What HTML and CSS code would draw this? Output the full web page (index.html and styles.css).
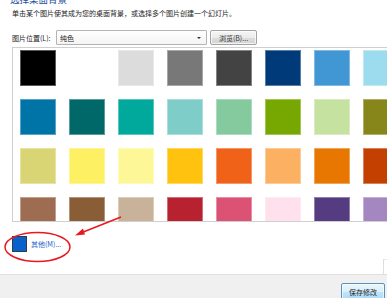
FILE: index.html
```html
<!DOCTYPE html>
<html>
<head>
<meta charset="utf-8">
<link rel="stylesheet" href="styles.css">
</head>
<body>
<div class="page">
  <div class="content">
    <div class="title">选择桌面背景</div>
    <div class="subtitle">单击某个图片使其成为您的桌面背景，或选择多个图片创建一个幻灯片。</div>
    <div class="location-row">
      <span class="label">图片位置(L):</span>
      <div class="select"><span class="select-text">纯色</span><span class="select-arrow"></span></div>
      <div class="btn">浏览(B)...</div>
    </div>
    <div class="list">
      <div class="grid">
        <div class="sw" style="background:#000000"></div>
        <div class="sw" style="background:#ffffff"></div>
        <div class="sw" style="background:#dcdcdc"></div>
        <div class="sw" style="background:#787878"></div>
        <div class="sw" style="background:#434343"></div>
        <div class="sw" style="background:#003a78"></div>
        <div class="sw" style="background:#4196d4"></div>
        <div class="sw" style="background:#9cdcee"></div>

        <div class="sw" style="background:#0073a7"></div>
        <div class="sw" style="background:#006869"></div>
        <div class="sw" style="background:#00a99c"></div>
        <div class="sw" style="background:#7ecdc9"></div>
        <div class="sw" style="background:#85c99f"></div>
        <div class="sw" style="background:#77a701"></div>
        <div class="sw" style="background:#c6e2a0"></div>
        <div class="sw" style="background:#86861a"></div>

        <div class="sw" style="background:#dad574"></div>
        <div class="sw" style="background:#fdf062"></div>
        <div class="sw" style="background:#fef797"></div>
        <div class="sw" style="background:#ffc20e"></div>
        <div class="sw" style="background:#ef6217"></div>
        <div class="sw" style="background:#fbb062"></div>
        <div class="sw" style="background:#e87702"></div>
        <div class="sw" style="background:#c44000"></div>

        <div class="sw" style="background:#9e6c51"></div>
        <div class="sw" style="background:#895e37"></div>
        <div class="sw" style="background:#c9b29a"></div>
        <div class="sw" style="background:#b82230"></div>
        <div class="sw" style="background:#dc5275"></div>
        <div class="sw" style="background:#fee1ec"></div>
        <div class="sw" style="background:#553b7f"></div>
        <div class="sw" style="background:#a487c0"></div>
      </div>
    </div>
    <div class="other-row">
      <span class="other-swatch"></span>
      <span class="other-link">其他(M)...</span>
    </div>
    <div class="spacer"><span class="edge"></span></div>
  </div>
  <div class="footer">
    <div class="save-btn">保存修改</div>
  </div>
  <svg class="annot" width="387" height="298" viewBox="0 0 387 298">
    <ellipse cx="37.5" cy="247" rx="32.5" ry="14.5" fill="none" stroke="#e8191e" stroke-width="1.5"/>
    <line x1="121" y1="217" x2="82" y2="232.5" stroke="#e8191e" stroke-width="1.5"/>
    <polygon points="75,235.5 83,228.5 85,234.5" fill="#e8191e"/>
  </svg>
</div>
</body>
</html>
```
FILE: styles.css
```css
html, body {
  margin: 0;
  padding: 0;
  overflow: hidden;
  background: #ffffff;
}
body {
  font-family: "Noto Sans CJK SC", "Noto Sans", sans-serif;
  width: 387px;
  height: 298px;
}
.page {
  position: relative;
  width: 387px;
  height: 298px;
  overflow: hidden;
  display: flex;
  flex-direction: column;
}
.content {
  padding-left: 12px;
  flex: 1;
  display: flex;
  flex-direction: column;
  min-width: 0;
}
.title {
  margin-top: -7px;
  margin-left: -2px;
  font-size: 9.5px;
  line-height: 12px;
  height: 12px;
  color: #1d4f9c;
  white-space: nowrap;
}
.subtitle {
  margin-top: 4px;
  font-size: 7px;
  line-height: 9px;
  color: #222;
  white-space: nowrap;
}
.location-row {
  margin-top: 12px;
  display: flex;
  align-items: center;
  height: 15px;
}
.label {
  font-size: 7px;
  color: #222;
  width: 44px;
  white-space: nowrap;
}
.select {
  width: 146px;
  height: 13px;
  border: 1px solid #b4b4b4;
  border-radius: 1px;
  background: linear-gradient(#ffffff, #f4f4f4);
  display: flex;
  align-items: center;
  padding-left: 3px;
  box-sizing: content-box;
}
.select-text {
  font-size: 7px;
  color: #222;
  flex: 1;
}
.select-arrow {
  width: 0;
  height: 0;
  border-left: 2px solid transparent;
  border-right: 2px solid transparent;
  border-top: 2.5px solid #333;
  margin-right: 5px;
}
.btn {
  margin-left: 3px;
  width: 45px;
  height: 13px;
  border: 1px solid #a3a3a3;
  border-radius: 2px;
  background: linear-gradient(#f6f6f6 0%, #ebebeb 50%, #dddddd 51%, #d4d4d4 100%);
  box-shadow: inset 0 0 0 1px rgba(255,255,255,0.7);
  font-size: 7px;
  color: #333;
  display: flex;
  align-items: center;
  justify-content: center;
  white-space: nowrap;
}
.list {
  margin-top: 2px;
  width: 420px;
  height: 171px;
  border: 1px solid #cfcfcf;
  overflow: hidden;
  padding: 2px 0 0 7px;
  box-sizing: content-box;
  flex-shrink: 0;
}
.grid {
  display: grid;
  grid-template-columns: repeat(8, 36px);
  grid-auto-rows: 35.5px;
  column-gap: 13px;
  row-gap: 13.5px;
}
.sw {
  box-shadow: inset 0 0 0 1px rgba(255,255,255,0.35);
}
.other-row {
  margin-top: 14px;
  display: flex;
  align-items: center;
  height: 16px;
}
.other-swatch {
  width: 13px;
  height: 14px;
  background: #0862cc;
  border: 1px solid #333a4a;
}
.other-link {
  margin-left: 4px;
  font-size: 7px;
  color: #1a62c8;
  white-space: nowrap;
}
.spacer {
  flex: 1;
  display: flex;
  justify-content: flex-end;
  align-items: flex-end;
}
.edge {
  width: 3px;
  height: 14px;
  border-left: 1px solid #dedede;
  border-top: 1px solid #e6e6e6;
}
.footer {
  height: 23px;
  background: #f0f0f0;
  border-top: 1px solid #dfdfdf;
  display: flex;
  justify-content: flex-end;
  align-items: flex-start;
  padding-right: 2px;
  flex-shrink: 0;
}
.save-btn {
  margin-top: 8px;
  width: 42px;
  height: 16px;
  border: 1px solid #5d8fb8;
  border-radius: 2px;
  background: linear-gradient(#e9f5fc 0%, #d9effb 50%, #bee6fb 51%, #a8d9f4 100%);
  box-shadow: inset 0 0 0 1px rgba(255,255,255,0.6);
  font-size: 7px;
  color: #222;
  display: flex;
  align-items: center;
  justify-content: center;
  white-space: nowrap;
}
.annot {
  position: absolute;
  left: 0;
  top: 0;
  pointer-events: none;
}
```
